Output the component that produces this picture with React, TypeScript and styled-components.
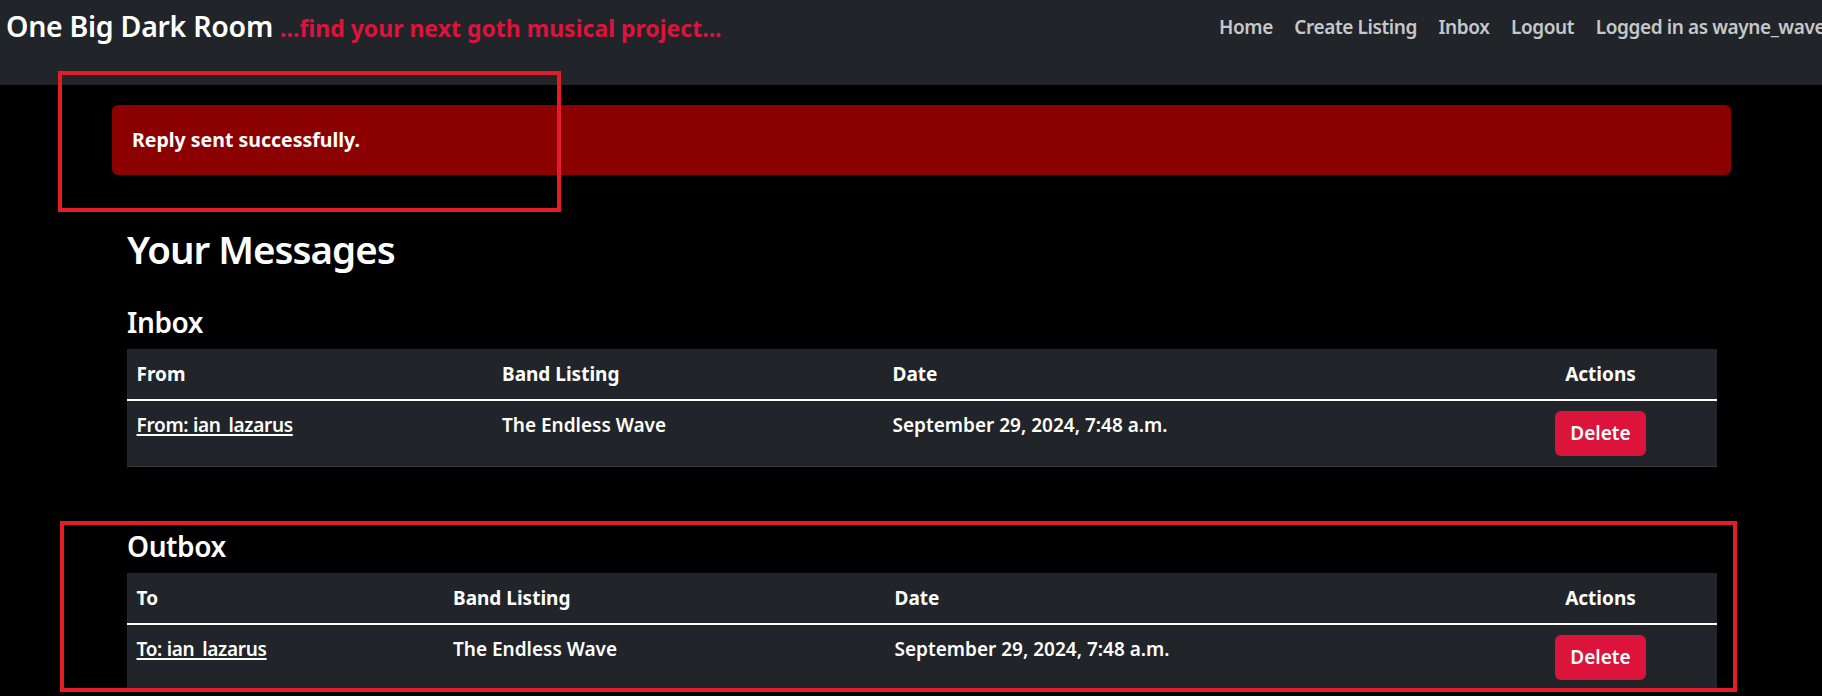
import React from "react";
import styled, { createGlobalStyle } from "styled-components";

const GlobalStyle = createGlobalStyle`
  html, body {
    margin: 0;
    padding: 0;
    background: #000;
  }
  body {
    font-family: "Noto Sans", "Open Sans", sans-serif;
    color: #fff;
    overflow: hidden;
  }
  * { box-sizing: border-box; }
`;

const Page = styled.div`
  position: relative;
  min-height: 696px;
`;

const Navbar = styled.nav`
  height: 85px;
  background: #212529;
  display: grid;
  grid-template-columns: 1213px max-content;
  padding-left: 6px;
  white-space: nowrap;
  overflow: hidden;
`;

const Brand = styled.a`
  display: block;
  padding-top: 6px;
  font-size: 28.5px;
  line-height: 40px;
  font-weight: 600;
  letter-spacing: -0.28px;
  color: #fff;
  text-decoration: none;
`;

const Tagline = styled.span`
  font-size: 23px;
  font-weight: 700;
  letter-spacing: 0;
  color: #dc143c;
`;

const NavList = styled.ul`
  display: flex;
  gap: 21.5px;
  margin: 0;
  padding: 12px 0 0;
  list-style: none;
`;

const NavLink = styled.a`
  font-size: 19px;
  line-height: 30px;
  font-weight: 600;
  letter-spacing: -0.4px;
  color: rgba(255, 255, 255, 0.75);
  text-decoration: none;
`;

const Main = styled.main`
  padding: 20px 0 0 112px;
`;

const Alert = styled.div`
  width: 1619px;
  height: 70px;
  padding: 20px;
  border-radius: 6px;
  background: #8b0000;
  color: #fff;
  font-size: 19.5px;
  line-height: 30px;
  font-weight: 700;
`;

const Content = styled.div`
  display: flex;
  flex-direction: column;
  align-items: flex-start;
  width: 1619px;
  padding: 0 14px 0 15px;
`;

const PageTitle = styled.h1`
  margin: 50px 0 0;
  font-size: 38.5px;
  line-height: 48px;
  font-weight: 600;
  letter-spacing: -1px;
`;

const SectionTitle = styled.h3`
  margin: 32px 0 10px;
  font-size: 28px;
  line-height: 34px;
  font-weight: 600;
  letter-spacing: -0.4px;
`;

const Table = styled.table`
  width: 1590px;
  border-collapse: collapse;
  table-layout: fixed;
  background: #212529;
  vertical-align: top;
  margin-bottom: 30px;
  font-size: 19px;
  line-height: 29px;
`;

const Th = styled.th<{ $w: number; $center?: boolean }>`
  width: ${(p) => p.$w}px;
  padding: 10.5px 9.5px;
  text-align: ${(p) => (p.$center ? "center" : "left")};
  font-weight: 700;
  border-bottom: 2px solid #fff;
`;

const Td = styled.td<{ $center?: boolean }>`
  padding: 10px 9.5px;
  text-align: ${(p) => (p.$center ? "center" : "left")};
  font-weight: 600;
  vertical-align: top;
  border-bottom: 1px solid #373b3e;
`;

const UserLink = styled.a`
  color: #fff;
  text-decoration: underline;
  text-decoration-thickness: 1.5px;
  text-underline-offset: 2px;
  letter-spacing: -0.3px;
`;

const DeleteButton = styled.button`
  height: 45px;
  padding: 8px 15px;
  border: 0;
  border-radius: 6px;
  background: #dc143c;
  color: #fff;
  font-family: inherit;
  font-size: 19px;
  line-height: 29px;
  font-weight: 600;
  cursor: pointer;
`;

const Annotation = styled.div<{ $x: number; $y: number; $w: number; $h: number }>`
  position: absolute;
  left: ${(p) => p.$x}px;
  top: ${(p) => p.$y}px;
  width: ${(p) => p.$w}px;
  height: ${(p) => p.$h}px;
  border: 4px solid #e31d25;
  pointer-events: none;
`;

type Col = { label: string; w: number; center?: boolean };

type Msg = { who: string; band: string; date: string };

function MessageTable({ cols, rows }: { cols: Col[]; rows: Msg[] }) {
  return (
    <Table>
      <thead>
        <tr>
          {cols.map((c) => (
            <Th key={c.label} $w={c.w} $center={c.center}>
              {c.label}
            </Th>
          ))}
        </tr>
      </thead>
      <tbody>
        {rows.map((r, i) => (
          <tr key={i}>
            <Td>
              <UserLink href="#">{r.who}</UserLink>
            </Td>
            <Td>{r.band}</Td>
            <Td>{r.date}</Td>
            <Td $center>
              <DeleteButton>Delete</DeleteButton>
            </Td>
          </tr>
        ))}
      </tbody>
    </Table>
  );
}

export default function App() {
  return (
    <Page>
      <GlobalStyle />
      <Navbar>
        <Brand href="#">
          One Big Dark Room <Tagline>...find your next goth musical project...</Tagline>
        </Brand>
        <NavList>
          <li><NavLink href="#">Home</NavLink></li>
          <li><NavLink href="#">Create Listing</NavLink></li>
          <li><NavLink href="#">Inbox</NavLink></li>
          <li><NavLink href="#">Logout</NavLink></li>
          <li><NavLink href="#">Logged in as wayne_wave</NavLink></li>
        </NavList>
      </Navbar>
      <Main>
        <Alert>Reply sent successfully.</Alert>
        <Content>
          <PageTitle>Your Messages</PageTitle>
          <SectionTitle>Inbox</SectionTitle>
          <MessageTable
            cols={[
              { label: "From", w: 365.5 },
              { label: "Band Listing", w: 390.5 },
              { label: "Date", w: 601 },
              { label: "Actions", w: 233, center: true },
            ]}
            rows={[
              {
                who: "From: ian_lazarus",
                band: "The Endless Wave",
                date: "September 29, 2024, 7:48 a.m.",
              },
            ]}
          />
          <SectionTitle>Outbox</SectionTitle>
          <MessageTable
            cols={[
              { label: "To", w: 316.5 },
              { label: "Band Listing", w: 441.5 },
              { label: "Date", w: 599 },
              { label: "Actions", w: 233, center: true },
            ]}
            rows={[
              {
                who: "To: ian_lazarus",
                band: "The Endless Wave",
                date: "September 29, 2024, 7:48 a.m.",
              },
            ]}
          />
        </Content>
      </Main>
      <Annotation $x={58} $y={71} $w={503} $h={141} />
      <Annotation $x={60} $y={521} $w={1677} $h={171} />
    </Page>
  );
}
